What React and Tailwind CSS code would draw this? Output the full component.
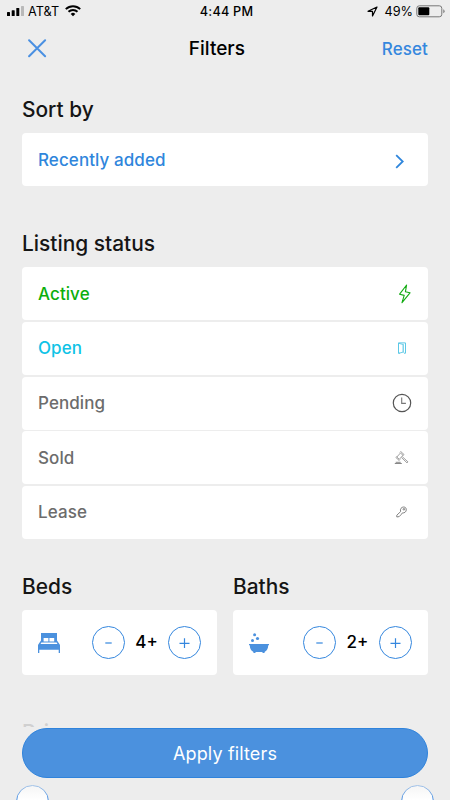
import React from "react";

const HEADING = "relative top-px whitespace-nowrap text-[20.900px] font-medium leading-[24px]";

function SignalIcon() {
  return (
    <svg width="18" height="12" viewBox="0 0 18 12" className="shrink-0">
      <rect x="0" y="7" width="3" height="4" rx=".6" fill="#000" />
      <rect x="4.7" y="5.2" width="3" height="5.8" rx=".6" fill="#000" />
      <rect x="9.3" y="3" width="3" height="8" rx=".6" fill="#000" />
      <rect x="14" y="1" width="3" height="10" rx=".6" fill="#b9b9b9" />
    </svg>
  );
}

function WifiIcon() {
  return (
    <svg width="16" height="12" viewBox="0 0 16 12" fill="none" stroke="#000" className="shrink-0">
      <path d="M.8 4.100C4.900.2 11.100.2 15.200 4.100" strokeWidth="2" />
      <path d="M3.500 6.800c2.500-2.400 6.500-2.400 9 0" strokeWidth="1.900" />
      <path d="M8 11.200 5.700 8.900a3.300 3.300 0 0 1 4.600 0z" fill="#000" stroke="none" />
    </svg>
  );
}

function BoltIcon() {
  return (
    <svg width="14" height="20" viewBox="0 0 14 20" fill="none" stroke="#12ab12" strokeWidth="1.100" strokeLinejoin="round" className="ml-[7px]">
      <path d="M8.600 1 1.600 10.200l4.600 1.200L4 18.600l8-9.800-4.600-1z" />
    </svg>
  );
}

function DoorIcon() {
  return (
    <svg width="10" height="12" viewBox="0 0 10 12" fill="none" stroke="#5cc8e6" strokeWidth="1">
      <path d="M3 11.200H1.500V.9h7v10.300H7" />
      <path d="m1.500 1.200 4.600 1.300v7.600l-4.600 1.300" strokeWidth=".9" />
      <path d="M6.400 2v9" strokeWidth=".6" />
    </svg>
  );
}

function ClockIcon() {
  return (
    <svg width="20" height="20" viewBox="0 0 20 20" fill="none">
      <circle cx="10" cy="10" r="8.700" stroke="#555" strokeWidth="1.200" />
      <path d="M9.700 4.500v5.900h4.200" stroke="#777" strokeWidth="1.100" />
    </svg>
  );
}

function GavelIcon() {
  return (
    <svg width="15" height="14" viewBox="0 0 15 14" fill="none" stroke="#888" strokeWidth=".8">
      <path d="m2.800 6 3.700-4 2.500 2.300-3.700 4z" />
      <path d="m5.800 1.400.9-.9 3.300 3-.9 1.100M2.800 5.500l-.9 1 3.300 3 .9-1" />
      <path d="m7.500 6.600 5.500 5.300 1-1-5.700-5.200" />
      <path d="M.8 12.500h7M1.700 11.300h5" strokeWidth="1" />
    </svg>
  );
}

function KeyIcon() {
  return (
    <svg width="11" height="12" viewBox="0 0 11 12" fill="none" stroke="#666" strokeWidth=".8" strokeLinejoin="round">
      <path d="M4.600 5.600C3.800 3 5.500 1 7.600 1c2 0 2.700 1.300 2.700 2.700 0 2-1.800 3.600-3.900 3.200L5.400 8.300 3.200 10.600.8 11V9.200z" />
      <circle cx="7.900" cy="3.300" r=".8" />
    </svg>
  );
}

function BedIcon() {
  return (
    <svg width="22" height="20" viewBox="0 0 22 20" fill="#4b91de">
      <path fillRule="evenodd" d="M3 0h16v7.500l2.400 3.500L22 12v8h-1.300v-3.200H1.300V20H0v-8l.6-1L3 7.500zM5.600 4.900v3.500h4.800V4.900zM11.400 4.900v3.500h4.800V4.900zM3.400 9.600l-.9 1.300h17l-.9-1.300z" />
    </svg>
  );
}

function BathIcon() {
  return (
    <svg width="20" height="20" viewBox="0 0 20 20" fill="#4b91de">
      <circle cx="5.600" cy="1.700" r="1.500" />
      <circle cx="8.500" cy="5.500" r="1.600" />
      <circle cx="3.500" cy="7.600" r="1.500" />
      <path d="M0 10.900h20v1.300h-.8c0 3-1.200 5.400-3.400 6.600l-.4 1.200h-1.700l-.4-.9H6.700l-.4.900H4.600l-.4-1.200C2 17.600.8 15.200.8 12.200H0z" />
    </svg>
  );
}

function Row({ label, color, children }) {
  return (
    <li className="flex h-[53.300px] items-center justify-between rounded bg-white pl-4">
      <span className={`text-[17px] font-medium leading-[22px] tracking-[0.080px] ${color}`}>{label}</span>
      <span className="flex w-[53px] justify-center">{children}</span>
    </li>
  );
}

function RoundButton({ label, children }) {
  return (
    <button aria-label={label} className="flex size-[33px] items-center justify-center rounded-full border border-[#3587de]">
      <svg width="11" height="11" viewBox="0 0 11 11" fill="none" stroke="#3587de" strokeWidth="1.200">
        {children}
      </svg>
    </button>
  );
}

function Counter({ title, value, icon }) {
  return (
    <section className="w-[195px]">
      <h2 className={`${HEADING} text-[#151515]`}>{title}</h2>
      <div className="mt-[12px] flex h-[65px] items-center rounded bg-white pl-4">
        <span className="flex w-[54px] shrink-0">{icon}</span>
        <RoundButton label={`Fewer ${title}`}><path d="M2.300 6h6.400" /></RoundButton>
        <span className="w-[43px] text-center text-[17px] font-medium">{value}</span>
        <RoundButton label={`More ${title}`}><path d="M.5 6.300h10M5.500 1.300v10" /></RoundButton>
      </div>
    </section>
  );
}

export default function App() {
  return (
    <div className="relative h-[800px] w-[450px] overflow-hidden bg-[#ededed] font-['Inter',sans-serif] text-black">
      <div className="grid h-[23px] grid-cols-3 items-center px-[7px] text-[12.700px] leading-none">
        <div className="flex items-center gap-[3px]">
          <SignalIcon />
          <span className="pt-[2px]">AT&amp;T</span>
          <span className="ml-[3px]"><WifiIcon /></span>
        </div>
        <span className="pt-[2px] text-center font-medium tracking-[0.200px]"><span className="ml-[3px]">4:44 PM</span></span>
        <div className="flex items-center justify-end">
          <svg width="11" height="11" viewBox="0 0 11 11" fill="none" stroke="#000" strokeWidth="1.200" strokeLinejoin="round" className="mr-[6px]">
            <path d="M10 1 1 5.300h4.500V10z" />
          </svg>
          <span className="pt-[2px]">49%</span>
          <svg width="29" height="13" viewBox="0 0 29 13" className="-mr-[2px] ml-[3px]">
            <rect x=".8" y=".8" width="25" height="11" rx="2.500" fill="none" stroke="#777" />
            <rect x="2.300" y="2.300" width="11" height="8" rx="1" fill="#000" />
            <path d="M27.300 4.300v4a2.200 2.200 0 0 0 0-4" fill="#777" />
          </svg>
        </div>
      </div>
      <header className="flex h-[50px] items-center justify-between pl-[28px] pr-[22px]">
        <svg width="19" height="19" viewBox="0 0 19 19" fill="none" stroke="#4a90e2" strokeWidth="2" strokeLinecap="round">
          <path d="m1.100 1.300 16 16M17.100 1.300l-16 16" />
        </svg>
        <h1 className="ml-[5px] pt-[2px] text-[19px] font-medium">Filters</h1>
        <button className="pt-[3px] text-[17px] font-medium tracking-[0.100px] text-[#3587de]">Reset</button>
      </header>

      <main className="px-[22px] pt-[24px]">
        <section>
          <h2 className={`${HEADING} text-[#151515]`}>Sort by</h2>
          <ul className="mt-[12px]">
            <Row label="Recently added" color="text-[#2f86dc]">
              <svg width="10" height="15" viewBox="0 0 10 15" fill="none" stroke="#2f86dc" strokeWidth="1.800" className="mr-[3px] mt-[3px]">
                <path d="m1.200 1.200 6.500 6.300-6.500 6.300" />
              </svg>
            </Row>
          </ul>
        </section>

        <section className="mt-[44.900px]">
          <h2 className={`${HEADING} text-[#151515]`}>Listing status</h2>
          <ul className="mt-[12px] flex flex-col gap-[1.370px]">
            <Row label="Active" color="text-[#0cae0c]"><BoltIcon /></Row>
            <Row label="Open" color="text-[#0fc3e6]"><DoorIcon /></Row>
            <Row label="Pending" color="text-[#6c6c6c]"><ClockIcon /></Row>
            <Row label="Sold" color="text-[#6c6c6c]"><GavelIcon /></Row>
            <Row label="Lease" color="text-[#6c6c6c]"><KeyIcon /></Row>
          </ul>
        </section>

        <div className="mt-[35.100px] flex gap-4">
          <Counter title="Beds" value="4+" icon={<BedIcon />} />
          <Counter title="Baths" value="2+" icon={<BathIcon />} />
        </div>

        <section className="mt-[45px]">
          <h2 className={`${HEADING} text-[#d0d0d0]`}>Price</h2>
          <div className="-mx-[6px] mt-[41px] flex justify-between">
            <span className="size-[33px] rounded-full border border-[#4a90e2] bg-white" />
            <span className="size-[33px] rounded-full border border-[#4a90e2] bg-white" />
          </div>
        </section>
      </main>

      <footer className="absolute inset-x-0 bottom-0 h-[73px] bg-[linear-gradient(#ededed_55px,rgba(237,237,237,.6)_57px,rgba(237,237,237,0)_73px)] px-[22px] pt-px">
        <button className="h-[50px] w-full rounded-full border border-[#2f83dc] bg-[#4b91de] pt-px text-[18px] tracking-[0.150px] text-white">
          Apply filters
        </button>
      </footer>
    </div>
  );
}
